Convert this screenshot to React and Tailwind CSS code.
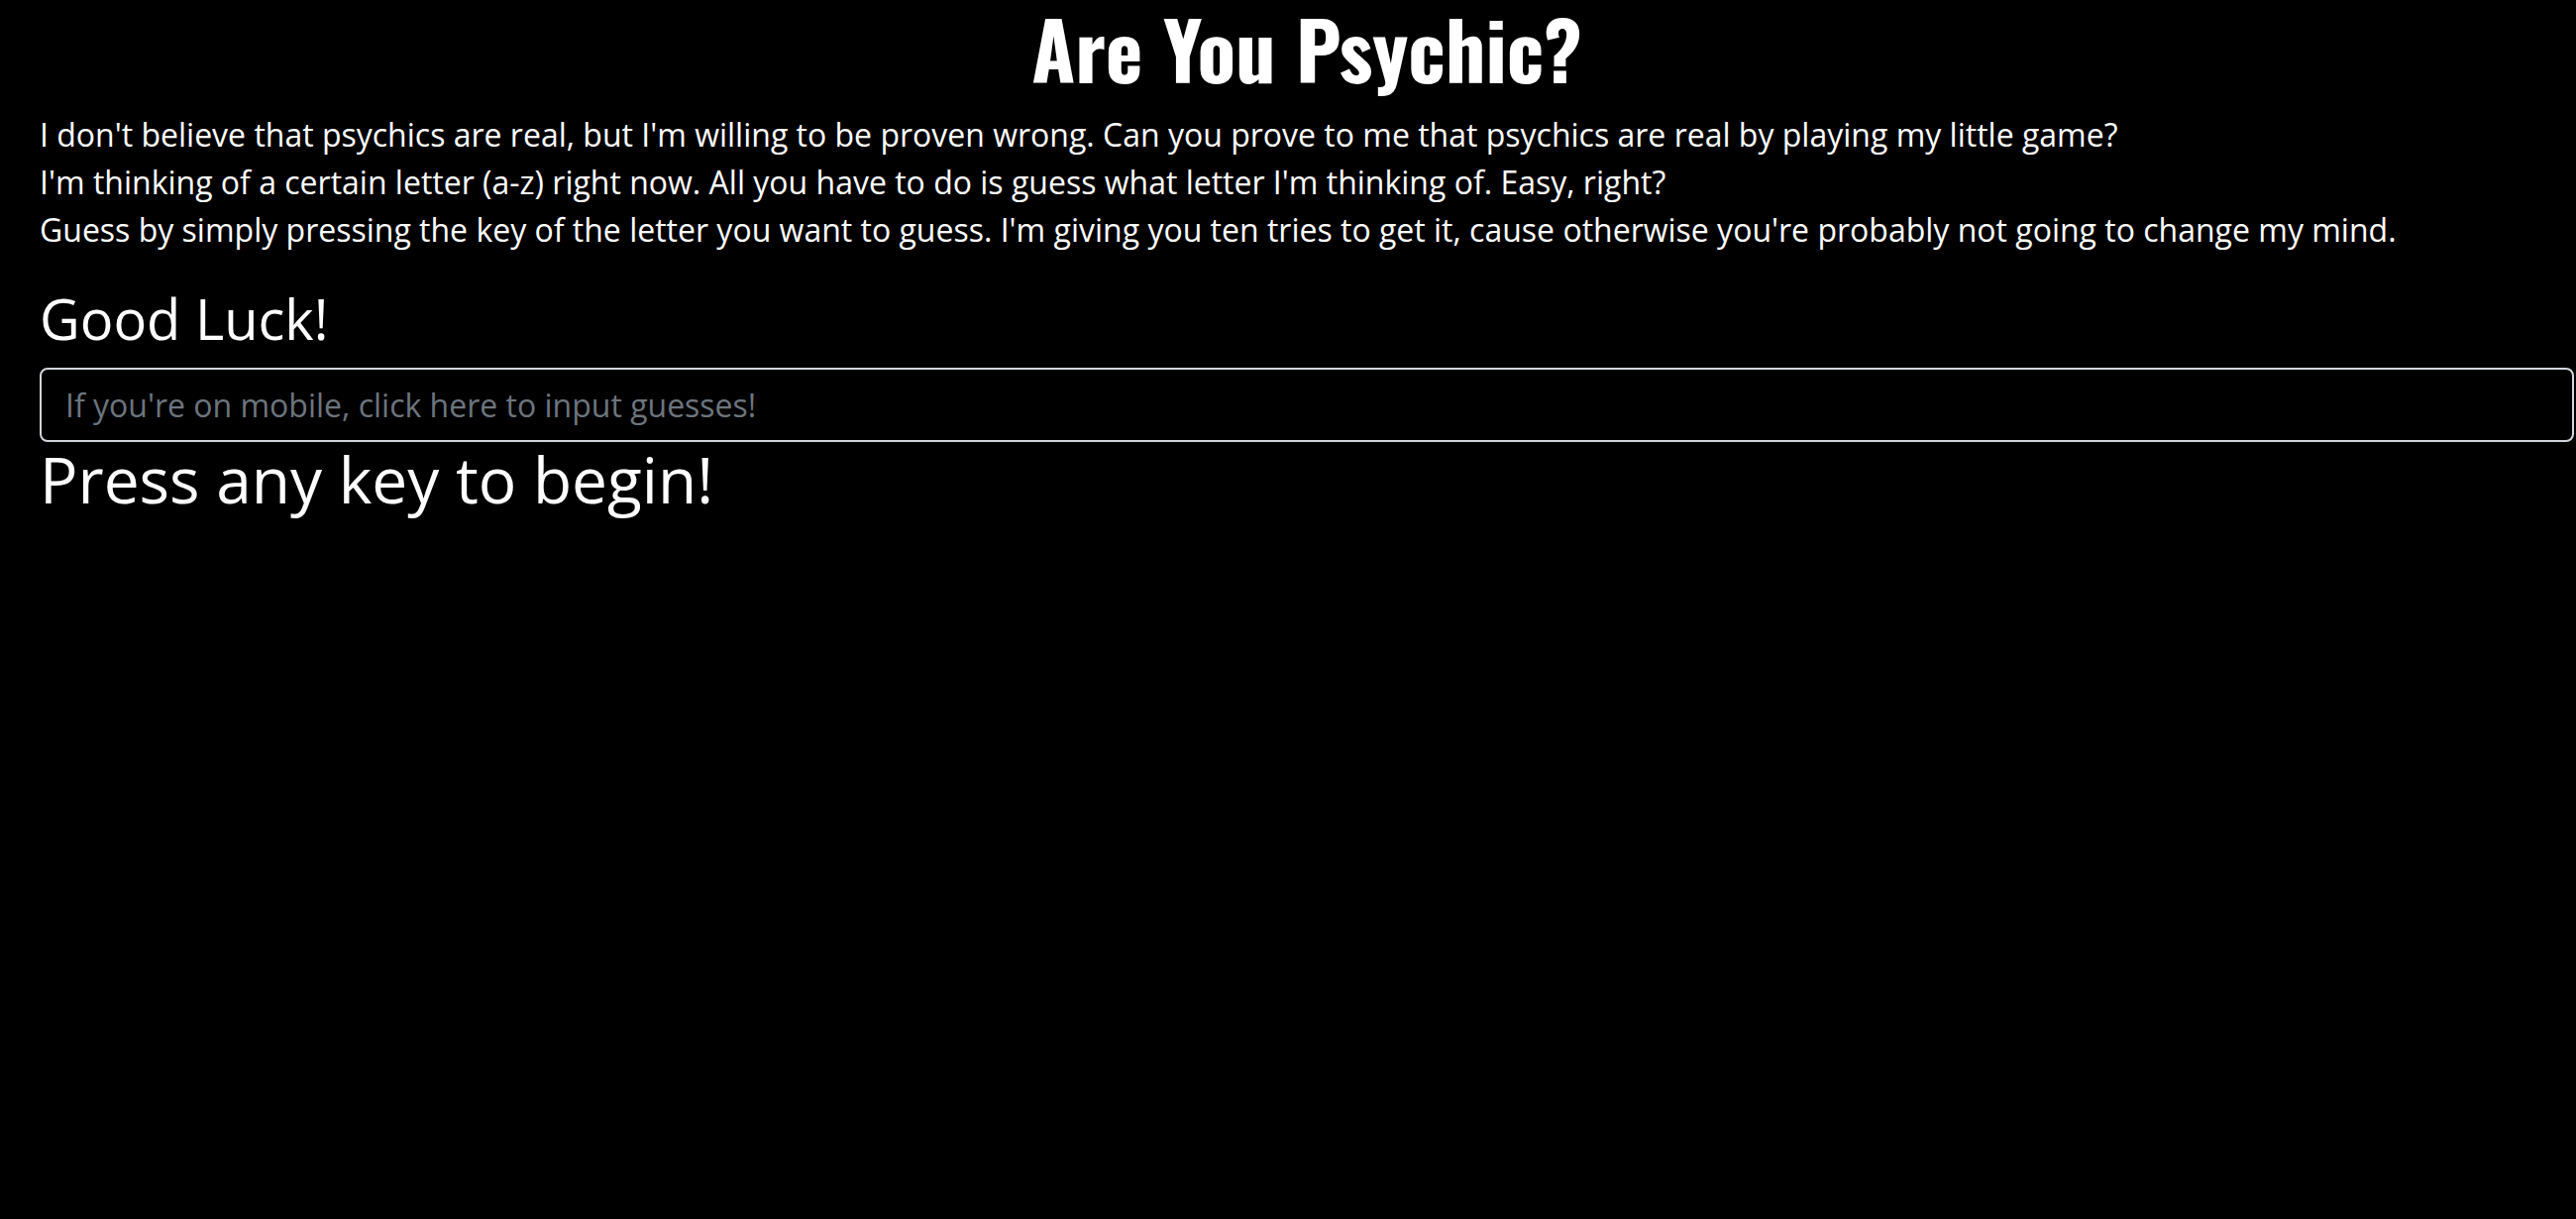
export default function App() {
  return (
    <div className="min-h-[1230px] w-full overflow-hidden bg-black text-white font-['Open_Sans',sans-serif]">
      <div className="pl-[40px] pr-[2px]">
        <h1 className="mb-[16px] text-center font-['Oswald','DejaVu_Sans_Condensed',sans-serif] text-[80px] font-bold leading-[96px]">
          Are You Psychic?
        </h1>
        <div className="mb-[32px] text-[32px] leading-[48px]">
          <p>
            I don't believe that psychics are real, but I'm willing to be proven wrong. Can you prove to me that psychics are real by
            playing my little game?
          </p>
          <p>I'm thinking of a certain letter (a-z) right now. All you have to do is guess what letter I'm thinking of. Easy, right?</p>
          <p>
            Guess by simply pressing the key of the letter you want to guess. I'm giving you ten tries to get it, cause otherwise you're
            probably not going to change my mind.
          </p>
        </div>
        <h3 className="mb-[16px] text-[56px] leading-[1.2]">Good Luck!</h3>
        <input
          type="text"
          placeholder="If you're on mobile, click here to input guesses!"
          className="block h-[75px] w-full rounded-[8px] border-2 border-[#d2d6dc] bg-black px-[24px] text-[32px] leading-[48px] text-white outline-none placeholder:text-[#6c757d]"
        />
        <h2 className="text-[64px] leading-[1.2]">Press any key to begin!</h2>
      </div>
    </div>
  );
}
